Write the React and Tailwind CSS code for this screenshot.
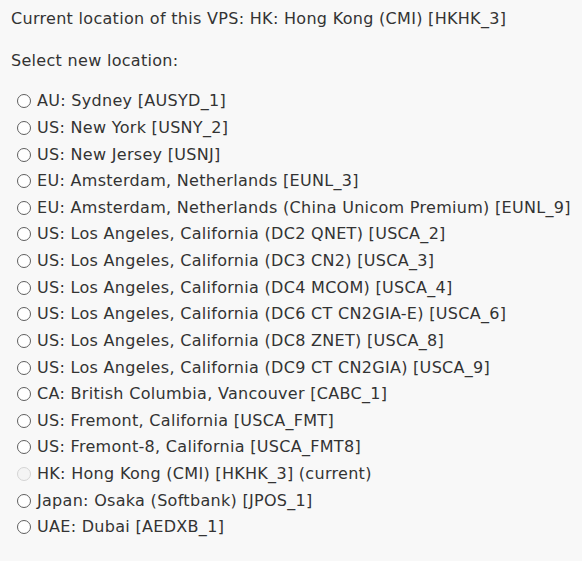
const LOCATIONS = [
  'AU: Sydney [AUSYD_1]',
  'US: New York [USNY_2]',
  'US: New Jersey [USNJ]',
  'EU: Amsterdam, Netherlands [EUNL_3]',
  'EU: Amsterdam, Netherlands (China Unicom Premium) [EUNL_9]',
  'US: Los Angeles, California (DC2 QNET) [USCA_2]',
  'US: Los Angeles, California (DC3 CN2) [USCA_3]',
  'US: Los Angeles, California (DC4 MCOM) [USCA_4]',
  'US: Los Angeles, California (DC6 CT CN2GIA-E) [USCA_6]',
  'US: Los Angeles, California (DC8 ZNET) [USCA_8]',
  'US: Los Angeles, California (DC9 CT CN2GIA) [USCA_9]',
  'CA: British Columbia, Vancouver [CABC_1]',
  'US: Fremont, California [USCA_FMT]',
  'US: Fremont-8, California [USCA_FMT8]',
  'HK: Hong Kong (CMI) [HKHK_3] (current)',
  'Japan: Osaka (Softbank) [JPOS_1]',
  'UAE: Dubai [AEDXB_1]',
]

// radio circle, greyed out for the current location
function Radio({ disabled }) {
  return (
    <span
      className={`inline-block w-[14px] h-[14px] rounded-full border-[1.5px] shrink-0 ${
        disabled ? 'border-[#d4d4d4] bg-[#f4f4f4]' : 'border-[#5f5f5f] bg-white'
      }`}
    />
  )
}

export default function App() {
  return (
    <div className="min-h-[561px] bg-[#f8f8f8] text-[#333] font-['DejaVu_Sans',sans-serif] text-[16px] tracking-[0.3px] px-[11px] pt-[6px]">
      <p className="leading-[26px]">Current location of this VPS: HK: Hong Kong (CMI) [HKHK_3]</p>
      <p className="leading-[26px] mt-[16px]">Select new location:</p>
      <div className="mt-[14px] flex flex-col">
        {LOCATIONS.map((loc) => {
          const current = loc.endsWith('(current)')
          return (
            <label key={loc} className="flex items-center gap-[6px] pl-[6px] h-[26.625px]">
              <Radio disabled={current} />
              <span>{loc}</span>
            </label>
          )
        })}
      </div>
    </div>
  )
}
